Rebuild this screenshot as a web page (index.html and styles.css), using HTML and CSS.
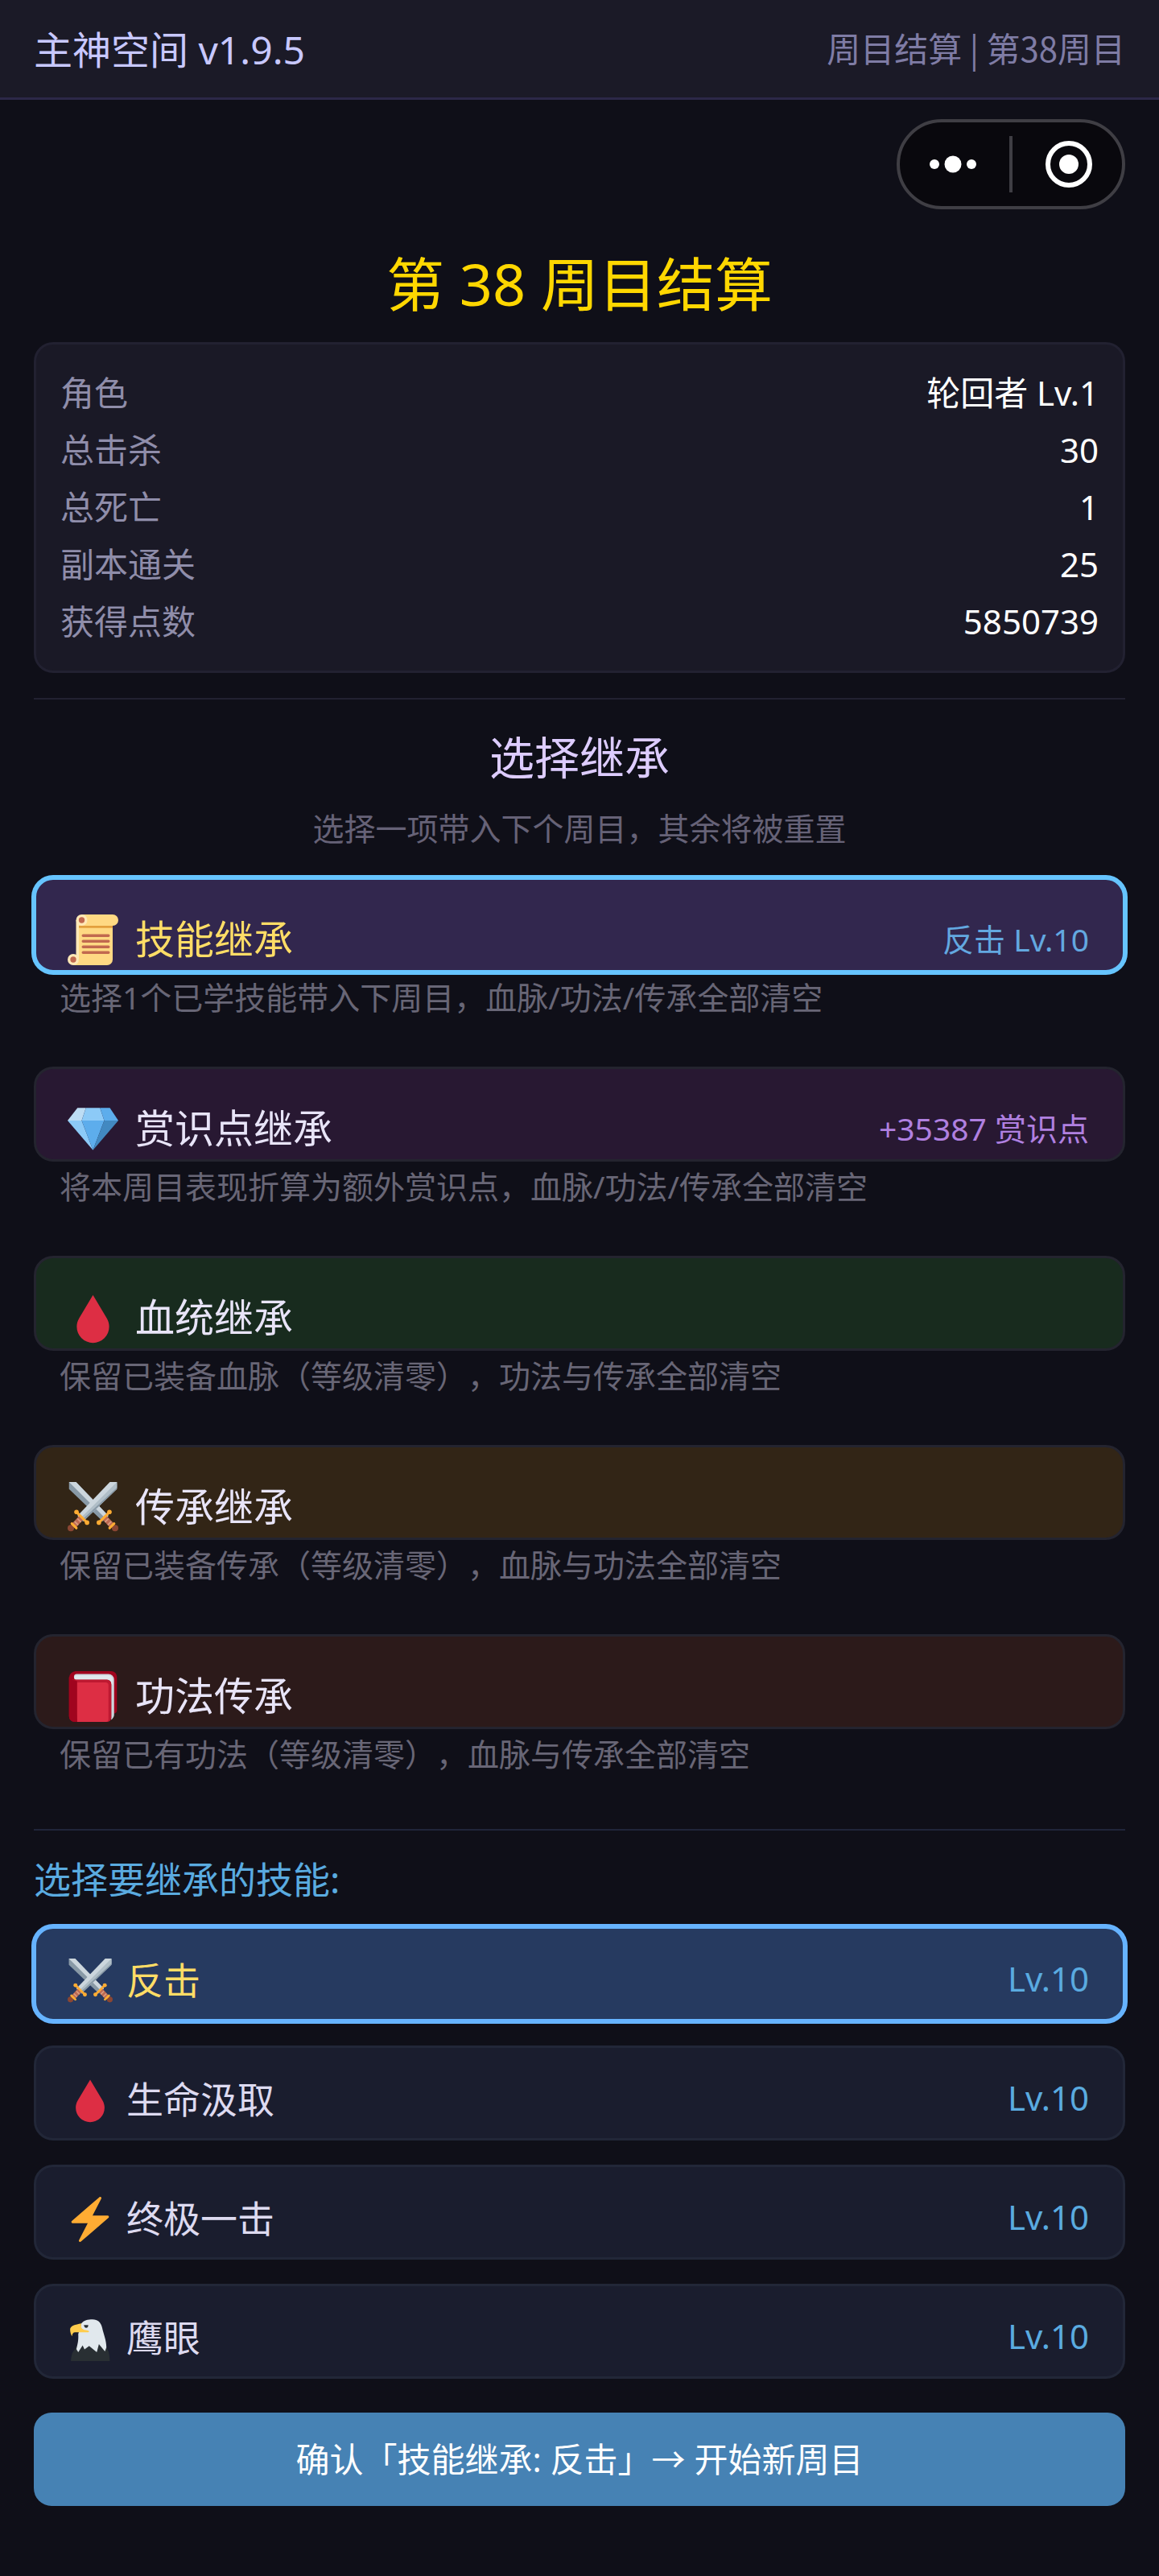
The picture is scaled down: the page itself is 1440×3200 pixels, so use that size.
FILE: index.html
```html
<!DOCTYPE html>
<html lang="zh-CN">
<head>
  <meta charset="UTF-8">
  <meta name="viewport" content="width=device-width, initial-scale=1.0">
  <title>主神空间 - 周目结算</title>
  <link rel="stylesheet" href="styles.css">
</head>
<body>
  <!-- 共用图标 -->
  <svg class="sprite" aria-hidden="true">
    <symbol id="icon-drop" viewBox="0 0 36 36">
      <path fill="#dd2e44" d="M18 1.600L8.200 18C7 20 6.500 22 6.500 24a11.500 11.500 0 0 0 23 0c0-2-.5-4-1.700-6z"/>
    </symbol>
    <symbol id="icon-swords" viewBox="0 0 36 36">
      <path fill="#8899a6" d="M1 0v5l24 23 4-4L6 0z"/>
      <path fill="#ccd6dd" d="M1 0l26 26 2-2L6 0z"/>
      <path stroke="#bf6952" stroke-width="4" d="M26 25l6 6.500"/>
      <path stroke="#d99e82" stroke-width="1" d="M26.500 28.500l2.500-2.500M28.500 30.500l2.500-2.500"/>
      <circle cx="33.700" cy="32.700" r="2.300" fill="#8a4633"/>
      <path stroke="#ffac33" stroke-width="1.800" stroke-linecap="round" d="M29.700 21.300l-7.500 7.500M33 29.500l-3.200 3.200"/>
      <circle cx="29.700" cy="21.300" r="1.600" fill="#ffac33"/>
      <circle cx="22.200" cy="28.800" r="1.600" fill="#ffac33"/>
      <path fill="#ccd6dd" d="M35 0v5L11 28l-4-4L30 0z"/>
      <path fill="#8899a6" d="M35 1v4L11 28l-2-2z"/>
      <path fill="#b0bec7" d="M35 0v4L10 27l-1-1z"/>
      <path stroke="#bf6952" stroke-width="4" d="M10 25l-6 6.500"/>
      <path stroke="#d99e82" stroke-width="1" d="M9.500 28.500L7 26M7.500 30.500L5 28"/>
      <circle cx="2.300" cy="32.700" r="2.300" fill="#8a4633"/>
      <path stroke="#ffac33" stroke-width="1.800" stroke-linecap="round" d="M6.300 21.300l7.500 7.500M3 29.500l3.200 3.200"/>
      <circle cx="6.300" cy="21.300" r="1.600" fill="#ffac33"/>
      <circle cx="13.800" cy="28.800" r="1.600" fill="#ffac33"/>
    </symbol>
  </svg>

  <header class="topbar">
    <span class="topbar-title">主神空间 v1.9.5</span>
    <span class="topbar-info">周目结算 | 第38周目</span>
  </header>

  <main class="page">
    <div class="capsule">
      <button type="button" class="capsule-btn" aria-label="更多">
        <svg class="capsule-dots" viewBox="0 0 60 22" fill="#fff"><circle cx="7" cy="11" r="6"/><circle cx="30" cy="11" r="10.500"/><circle cx="53" cy="11" r="6"/></svg>
      </button>
      <button type="button" class="capsule-btn capsule-close" aria-label="关闭">
        <svg class="capsule-ring" viewBox="0 0 60 60"><circle cx="30" cy="30" r="26" fill="none" stroke="#fff" stroke-width="6"/><circle cx="30" cy="30" r="12" fill="#fff"/></svg>
      </button>
    </div>

    <h1>第 38 周目结算</h1>

    <dl class="stats">
      <div class="stat"><dt>角色</dt><dd>轮回者 Lv.1</dd></div>
      <div class="stat"><dt>总击杀</dt><dd>30</dd></div>
      <div class="stat"><dt>总死亡</dt><dd>1</dd></div>
      <div class="stat"><dt>副本通关</dt><dd>25</dd></div>
      <div class="stat"><dt>获得点数</dt><dd>5850739</dd></div>
    </dl>

    <!-- 继承方式 -->
    <section class="inherit">
      <h2>选择继承</h2>
      <p class="hint">选择一项带入下个周目，其余将被重置</p>

      <button type="button" class="option option-skill selected" aria-pressed="true">
        <svg class="icon" viewBox="0 0 36 36">
          <path fill="#ffd983" d="M10 0h22a4 4 0 0 1 0 8v24a4 4 0 0 1-4 4H4l4-4V4z"/>
          <path fill="#e39f3d" d="M8 8h24v1.600H8z"/>
          <path fill="#ffe8b6" d="M6 4h2v28H6z"/>
          <circle cx="10" cy="4" r="4" fill="#ffe8b6"/><circle cx="10" cy="4" r="2.100" fill="#c1694f"/>
          <circle cx="4" cy="32" r="4" fill="#ffe8b6"/><circle cx="4" cy="32" r="2.100" fill="#c1694f"/>
          <path stroke="#c1694f" stroke-width="2" stroke-linecap="round" d="M11 15h18M11 19h18M11 23h18M11 27h18"/>
        </svg>
        <span class="name">技能继承</span>
        <span class="value">反击 Lv.10</span>
      </button>
      <p class="desc">选择1个已学技能带入下周目，血脉/功法/传承全部清空</p>

      <button type="button" class="option option-point" aria-pressed="false">
        <svg class="icon" viewBox="0 0 36 36">
          <path fill="#bdddf4" d="M7 3h6l-3 9H0z"/>
          <path fill="#8ccaf7" d="M13 3h10l3 9H10z"/>
          <path fill="#5dadec" d="M23 3h7l6 9H26z"/>
          <path fill="#8ccaf7" d="M0 12h10l8 21z"/>
          <path fill="#5dadec" d="M10 12h16l-8 21z"/>
          <path fill="#4289c1" d="M26 12h10L18 33z"/>
        </svg>
        <span class="name">赏识点继承</span>
        <span class="value">+35387 赏识点</span>
      </button>
      <p class="desc">将本周目表现折算为额外赏识点，血脉/功法/传承全部清空</p>

      <button type="button" class="option option-blood" aria-pressed="false">
        <svg class="icon"><use href="#icon-drop"/></svg>
        <span class="name">血统继承</span>
      </button>
      <p class="desc">保留已装备血脉（等级清零），功法与传承全部清空</p>

      <button type="button" class="option option-legacy" aria-pressed="false">
        <svg class="icon"><use href="#icon-swords"/></svg>
        <span class="name">传承继承</span>
      </button>
      <p class="desc">保留已装备传承（等级清零），血脉与功法全部清空</p>

      <button type="button" class="option option-art" aria-pressed="false">
        <svg class="icon" viewBox="0 0 36 36">
          <path fill="#a0041e" d="M5.500 0H31a4 4 0 0 1 4 4v24c0 1-1 2-2 2L28 36H5a4 4 0 0 1-4-4V5a5 5 0 0 1 4.500-5z"/>
          <path fill="#ccd6dd" d="M6.500 2H29a4 4 0 0 1 4 4v25c0 1-.6 2.500-2 3.500V9a3 3 0 0 0-3-3H6.500a2 2 0 0 1 0-4z"/>
          <path fill="#e1e8ed" d="M6.500 3H29a3 3 0 0 1 3 3v4l-1-1a3 3 0 0 0-3-3H6a1.500 1.500 0 0 1 .5-3z"/>
          <path fill="#be1931" d="M3 6h25a3 3 0 0 1 3 3v24a3 3 0 0 1-3 3H7z"/>
          <path fill="#dd2e44" d="M6.700 8H27a2 2 0 0 1 2 2v24a2 2 0 0 1-2 2H6.700z"/>
          <path fill="#a0041e" d="M1 4l2 2 3.700 1v29H5a4 4 0 0 1-4-4z"/>
        </svg>
        <span class="name">功法传承</span>
      </button>
      <p class="desc">保留已有功法（等级清零），血脉与传承全部清空</p>
    </section>

    <!-- 技能列表 -->
    <section class="skills">
      <h3>选择要继承的技能:</h3>
      <div class="skill-list">
        <button type="button" class="skill selected" aria-pressed="true">
          <svg class="icon"><use href="#icon-swords"/></svg>
          <span class="name">反击</span>
          <span class="value">Lv.10</span>
        </button>
        <button type="button" class="skill" aria-pressed="false">
          <svg class="icon"><use href="#icon-drop"/></svg>
          <span class="name">生命汲取</span>
          <span class="value">Lv.10</span>
        </button>
        <button type="button" class="skill" aria-pressed="false">
          <svg class="icon" viewBox="0 0 36 36">
            <path fill="#ffac33" d="M32.938 15.651C32.792 15.260 32.418 15 32 15H19.925L26.890 1.458c.219-.426.106-.947-.271-1.243C26.437.071 26.218 0 26 0c-.233 0-.466.082-.653.243L18 6.588 3.347 19.243c-.316.273-.43.714-.284 1.105S3.582 21 4 21h12.075L9.110 34.542c-.219.426-.106.947.271 1.243.182.144.401.215.619.215.233 0 .466-.082.653-.243L18 29.412l14.653-12.655c.317-.273.43-.714.285-1.106z"/>
          </svg>
          <span class="name">终极一击</span>
          <span class="value">Lv.10</span>
        </button>
        <button type="button" class="skill" aria-pressed="false">
          <svg class="icon" viewBox="0 0 36 36">
            <path fill="#292f33" d="M2.600 36c.3-4 1-7 2.600-8.500L8 23h22l2.500 5c.8 2 1.100 5 1.200 8z"/>
            <path fill="#e1e8ed" d="M11 6c2-2.500 5-3.200 9-3.200 4 0 6.500 2.200 7.600 6.500 1 5 3.400 10 3.400 15.700l-1.200 3.300L25 22.500 23.300 29 17.200 24l-3.700 2.700L12 23.500 8.500 29 7 26.500c1-4 1.800-7 1.500-12z"/>
            <path fill="#ffcc4d" d="M11 6C6 7 2 7.800 2 11c0 2 .7 4 1.500 5.300.2-2 .8-3.300 2.500-3.300h10c1.500 0 1.500-1.300 0-1.500-4-.3-6-1.500-5-5.500z"/>
            <path fill="#292f33" d="M13 7.200h3.500c0 1.500-.7 2.300-1.700 2.300S13.300 8.500 13 7.200z"/>
          </svg>
          <span class="name">鹰眼</span>
          <span class="value">Lv.10</span>
        </button>
      </div>
    </section>

    <button type="button" class="confirm">确认「技能继承: 反击」→ 开始新周目</button>
  </main>
</body>
</html>
```
FILE: styles.css
```css
* {
  box-sizing: border-box;
}
body {
  margin: 0;
  background-color: #0f0f18;
  color: #e8e4f8;
  font-family: "Noto Sans", "Noto Sans CJK SC", sans-serif;
  font-size: 42px;
  text-spacing-trim: space-all;
}
h1, h2, h3, p, dl, dd {
  margin: 0;
  font-weight: 400;
}
button {
  font-family: inherit;
  color: inherit;
  cursor: pointer;
}
.sprite {
  display: none;
}

/* 顶栏 */
.topbar {
  display: flex;
  justify-content: space-between;
  align-items: center;
  height: 124px;
  padding: 0 42px 4px;
  background-color: #1b1a27;
  border-bottom: 3px solid #2c2848;
}
.topbar-title {
  font-size: 48px;
  color: #c8c8ff;
}
.topbar-info {
  font-family: "Noto Sans CJK SC", sans-serif;
  color: #7f7ca5;
}

.page {
  padding: 24px 42px 84px;
}

/* 右上角胶囊 */
.capsule {
  display: grid;
  grid-template-columns: 132px 1fr;
  width: 284px;
  height: 112px;
  margin-left: auto;
  background-color: #09080d;
  border: 4px solid #3f3e44;
  border-radius: 56px;
}
.capsule-btn {
  display: flex;
  justify-content: center;
  align-items: center;
  padding: 0;
  background: none;
  border: none;
}
.capsule-close {
  justify-content: flex-start;
  gap: 40px;
  padding-left: 4px;
}
.capsule-close::before {
  content: "";
  width: 4px;
  height: 70px;
  background-color: #3f3e44;
}
.capsule-dots {
  width: 60px;
  height: 22px;
}
.capsule-ring {
  width: 60px;
  height: 60px;
}

h1 {
  margin: 42px 0 23px;
  font-size: 72px;
  line-height: 100px;
  text-align: center;
  color: #ffd700;
}

/* 统计 */
.stats {
  padding: 24px 30px 26px;
  background-color: #1a1926;
  border: 3px solid #222131;
  border-radius: 24px;
}
.stat {
  display: flex;
  justify-content: space-between;
  line-height: 71px;
}
.stat dt {
  color: #8f8daa;
}
.stat dd {
  color: #fff;
}

/* 继承选项 */
.inherit {
  margin-top: 31px;
  padding-top: 31px;
  border-top: 2px solid #222131;
}
h2 {
  font-size: 56px;
  line-height: 80px;
  text-align: center;
  color: #ddccff;
}
.hint {
  margin: 20px 0 32px;
  font-size: 39px;
  line-height: 58px;
  text-align: center;
  color: #666277;
}
.option,
.skill {
  display: flex;
  align-items: center;
  width: 100%;
  height: 118px;
  border: 3px solid #24242f;
  border-radius: 24px;
  text-align: left;
}
.name {
  padding-bottom: 8px;
}
.option {
  gap: 21px;
  padding: 36px 42px 0 39px;
  font-size: 49px;
}
.option .icon {
  width: 63px;
  height: 63px;
}
.option .value {
  margin-left: auto;
  padding-bottom: 4px;
  font-size: 39px;
  color: #63a8e0;
}
.option-skill {
  background-color: #32274e;
}
.option-point {
  background-color: #281832;
}
.option-point .value {
  color: #b080e0;
}
.option-blood {
  background-color: #182b1e;
}
.option-legacy {
  background-color: #322516;
}
.option-art {
  background-color: #2c1a1a;
}
.selected .name {
  color: #ffdd66;
}
.option.selected {
  border-color: #66c4ff;
  box-shadow: 0 0 0 3px #66c4ff;
}
.desc {
  margin-bottom: 55px;
  padding: 0 32px;
  font-size: 39px;
  line-height: 62px;
  color: #686676;
}

/* 技能 */
.skills {
  margin-top: 62px;
  padding-top: 27px;
  border-top: 2px solid #20253a;
}
h3 {
  margin-bottom: 26px;
  font-size: 46px;
  line-height: 66px;
  color: #5aabe0;
}
.skill-list {
  display: flex;
  flex-direction: column;
  gap: 30px;
}
.skill {
  gap: 17px;
  padding: 17px 42px 0 39px;
  background-color: #1a1d2e;
  border-color: #222738;
  font-size: 46px;
  color: #dddaf0;
}
.skill .icon {
  width: 56px;
  height: 56px;
}
.skill .value {
  margin-left: auto;
  padding-bottom: 6px;
  font-size: 42px;
  color: #5aabe0;
}
.skill.selected {
  background-color: #263a60;
  border-color: #66b3ff;
  box-shadow: 0 0 0 3px #66b3ff;
}

.confirm {
  display: block;
  width: 100%;
  height: 116px;
  margin-top: 42px;
  padding: 0 0 6px;
  background-color: #4682b4;
  border: none;
  border-radius: 22px;
  font-size: 42px;
  color: #fff;
}
```
